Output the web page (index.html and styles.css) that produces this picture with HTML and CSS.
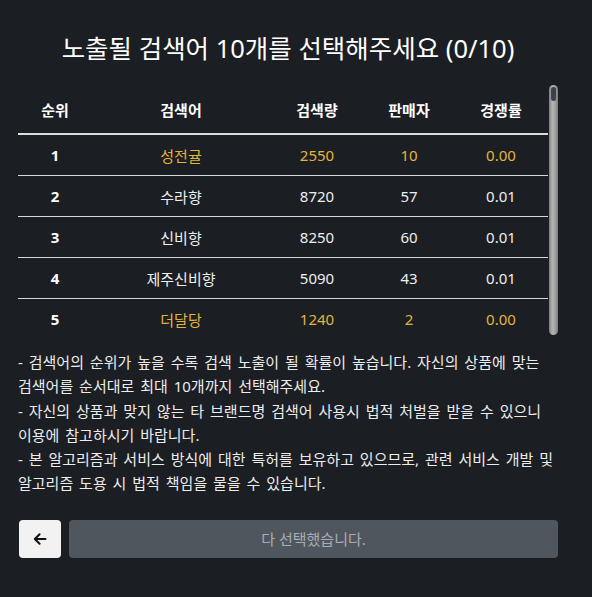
FILE: index.html
```html
<!DOCTYPE html>
<html lang="ko">
<head>
<meta charset="utf-8">
<link rel="stylesheet" href="styles.css">
</head>
<body>
<div class="page">
  <h1 class="title">노출될 검색어 10개를 선택해주세요 (0/10)</h1>
  <div class="table-wrap">
    <div class="scroll">
      <table class="kw">
        <colgroup>
          <col class="c1"><col class="c2"><col class="c3"><col class="c4"><col class="c5">
        </colgroup>
        <thead>
          <tr><th>순위</th><th>검색어</th><th>검색량</th><th>판매자</th><th>경쟁률</th></tr>
        </thead>
        <tbody>
          <tr class="hl"><td class="rank">1</td><td>성전귤</td><td>2550</td><td>10</td><td>0.00</td></tr>
          <tr><td class="rank">2</td><td>수라향</td><td>8720</td><td>57</td><td>0.01</td></tr>
          <tr><td class="rank">3</td><td>신비향</td><td>8250</td><td>60</td><td>0.01</td></tr>
          <tr><td class="rank">4</td><td>제주신비향</td><td>5090</td><td>43</td><td>0.01</td></tr>
          <tr class="hl"><td class="rank">5</td><td>더달당</td><td>1240</td><td>2</td><td>0.00</td></tr>
        </tbody>
      </table>
    </div>
    <div class="sbar"><div class="sthumb"></div></div>
  </div>
  <p class="notice">- 검색어의 순위가 높을 수록 검색 노출이 될 확률이 높습니다. 자신의 상품에 맞는 검색어를 순서대로 최대 10개까지 선택해주세요.<br>- 자신의 상품과 맞지 않는 타 브랜드명 검색어 사용시 법적 처벌을 받을 수 있으니 이용에 참고하시기 바랍니다.<br>- 본 알고리즘과 서비스 방식에 대한 특허를 보유하고 있으므로, 관련 서비스 개발 및 알고리즘 도용 시 법적 책임을 물을 수 있습니다.</p>
  <div class="actions">
    <button class="back" type="button" aria-label="뒤로">
      <svg width="16" height="16" viewBox="0 0 16 16"><path d="M13.5 8H2.8M7.6 3.2 2.8 8l4.8 4.8" fill="none" stroke="#111" stroke-width="2" stroke-linecap="round" stroke-linejoin="round"/></svg>
    </button>
    <button class="done" type="button">다 선택했습니다.</button>
  </div>
</div>
</body>
</html>
```
FILE: styles.css
```css
html, body {
  margin: 0;
  padding: 0;
  background: #1b1e23;
}
body {
  font-family: "Noto Sans", "Noto Sans CJK KR", sans-serif;
  color: #f2f2f2;
}
.page {
  width: 540px;
  padding: 0 34px 0 18px;
}
.title {
  margin: 0;
  padding-top: 30px;
  height: 36px;
  line-height: 36px;
  font-size: 25.5px;
  font-weight: 400;
  text-align: center;
  color: #ffffff;
}
.table-wrap {
  display: flex;
  gap: 1px;
  margin-top: 19px;
}
.scroll {
  width: 530px;
  height: 252px;
  overflow: hidden;
}
.kw {
  width: 530px;
  table-layout: fixed;
  border-collapse: collapse;
  font-size: 15px;
}
.c1 { width: 74px; }
.c2 { width: 178px; }
.c3 { width: 94px; }
.c4 { width: 90px; }
.c5 { width: 94px; }
.kw th {
  height: 48px;
  padding: 0;
  font-weight: 700;
  text-align: center;
  color: #ffffff;
  border-bottom: 2px solid #dcdcdc;
}
.kw td {
  height: 40px;
  padding: 0;
  text-align: center;
  color: #eeeeee;
  border-bottom: 1px solid #d8d8d8;
}
.kw tr.hl td { color: #e3b43c; }
.kw td.rank,
.kw tr.hl td.rank {
  color: #ffffff;
  font-weight: 700;
}
.sbar {
  width: 9px;
  height: 250px;
  border-radius: 5px;
  background: linear-gradient(90deg, #7c7c7c 0%, #b4b4b4 35%, #a6a6a6 65%, #7a7a7a 100%);
  display: flex;
  justify-content: center;
  padding-top: 2px;
  box-sizing: border-box;
}
.sthumb {
  width: 5px;
  height: 14px;
  border-radius: 3px;
  background: #3b4152;
}
.notice {
  margin: 13px 0 0;
  font-size: 15px;
  line-height: 24.3px;
  color: #ececec;
  word-break: keep-all;
  word-spacing: 2px;
}
.actions {
  display: flex;
  gap: 8px;
  margin-top: 24px;
}
.back {
  width: 42px;
  height: 38px;
  margin-left: 1px;
  border: 0;
  border-radius: 4px;
  background: #f2f2f2;
  display: flex;
  align-items: center;
  justify-content: center;
  padding: 0;
}
.done {
  flex: 1;
  height: 38px;
  border: 0;
  border-radius: 4px;
  background: #50565e;
  color: #a9adb2;
  font-family: "Noto Sans", "Noto Sans CJK KR", sans-serif;
  font-size: 15px;
  padding: 0;
}
```
